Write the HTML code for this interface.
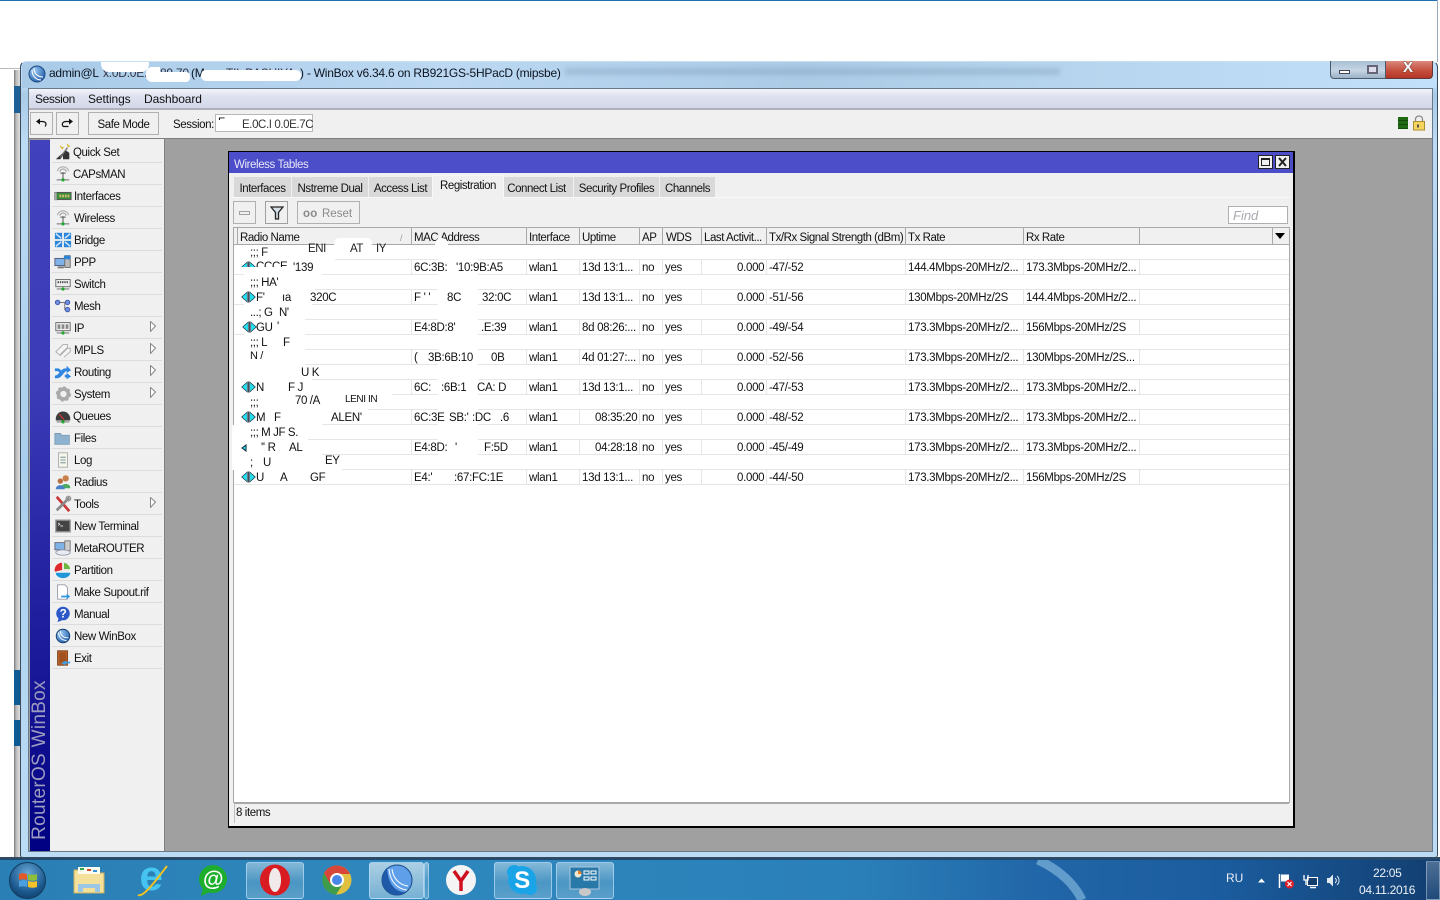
<!DOCTYPE html>
<html><head><meta charset="utf-8"><title>WinBox</title>
<style>
*{box-sizing:border-box}
html,body{margin:0;padding:0;background:#fff}
body{width:1440px;height:900px;position:relative;overflow:hidden;font:11.500px/14px "Liberation Sans",sans-serif;color:#111;letter-spacing:-.4px}
div,span,svg{position:absolute}
span{white-space:nowrap;margin-top:1px}
span.z{margin-top:0}
.mi{left:52px;width:110px;height:22px;border-bottom:1px solid #dcdcdc}
.mi span{left:22px;top:4px}
.mi svg{left:2px;top:2px;width:18px;height:18px}
.mi svg.sub{left:98px;top:4px;width:6px;height:11px}
.tab{top:177px;height:20px;background:#d9d9d9;text-align:center;line-height:24px;letter-spacing:-.45px}
.rw{left:411px;width:878px;height:16px;border-top:1px solid #e6e6e6;border-bottom:1px solid #e6e6e6;
background-image:linear-gradient(#e6e6e6,#e6e6e6),linear-gradient(#e6e6e6,#e6e6e6),linear-gradient(#e6e6e6,#e6e6e6),linear-gradient(#e6e6e6,#e6e6e6),linear-gradient(#e6e6e6,#e6e6e6),linear-gradient(#e6e6e6,#e6e6e6),linear-gradient(#e6e6e6,#e6e6e6),linear-gradient(#e6e6e6,#e6e6e6),linear-gradient(#e6e6e6,#e6e6e6),linear-gradient(#e6e6e6,#e6e6e6);
background-size:1px 100%;background-repeat:no-repeat;background-position:0 0,115px 0,168px 0,228px 0,251px 0,290px 0,355px 0,494px 0,612px 0,728px 0}
.ln{height:1px;background:#e6e6e6}
.t{line-height:14px;letter-spacing:-.3px}
.h{top:230px;line-height:14px;letter-spacing:-.45px}
.hs{top:228px;width:1px;height:17px;background:#a8a8a8}
.w{background:#fff}
span.tt{font-size:12px;letter-spacing:-.24px;top:66px;color:#0c1420;margin-top:0}
.tb{top:862px;height:37px;border:1px solid rgba(190,225,250,.65);border-radius:3px;background:linear-gradient(180deg,rgba(255,255,255,.42),rgba(255,255,255,.14) 55%,rgba(255,255,255,.22))}
</style></head>
<body>
<svg width="0" height="0" style="left:0;top:0"><defs>
<symbol id="reg" viewBox="0 0 15 12"><path d="M.7 6 6.300 1V11ZM14.300 6 8.700 1V11Z" fill="#22e0f0" stroke="#234" stroke-width=".7"/><path d="M7.500 .5V11.500" stroke="#123" stroke-width=".8"/></symbol>
<symbol id="ant" viewBox="0 0 20 20"><path d="M4 7a6 5 0 0 1 12 0" fill="none" stroke="#aaa" stroke-width="1.200"/><path d="M6.500 7.500a3.500 3 0 0 1 7 0" fill="none" stroke="#999" stroke-width="1.100"/><path d="M10 8V16M7 9h6" stroke="#555" stroke-width="1.100"/><path d="M3 16.500h14" stroke="#888" stroke-width="1.400"/><circle cx="10" cy="16.500" r="1.800" fill="#1fa82e"/></symbol>
<symbol id="sw" viewBox="0 0 20 20"><rect x="2" y="5" width="16" height="8" fill="#eee" stroke="#666"/><path d="M4 8h12" stroke="#444" stroke-dasharray="1.500 1" stroke-width="2"/><path d="M3 15.500h14" stroke="#888" stroke-width="1.300"/><circle cx="10" cy="15.500" r="1.800" fill="#1fa82e"/></symbol>
<symbol id="arr" viewBox="0 0 6 11"><path d="M.5.500 5.500 5 .5 10.500Z" fill="#fff" stroke="#888"/></symbol>
</defs></svg>

<!-- desktop top line -->
<div style="left:0;top:0;width:1440px;height:1px;background:#1f6fb2"></div>
<div style="left:1437px;top:0;width:3px;height:62px;background:#fff;border-left:1px solid #9ab"></div>

<!-- window behind -->
<div style="left:0;top:68px;width:20px;height:1px;background:#bbb"></div>
<div style="left:14px;top:70px;width:7px;height:788px;background:linear-gradient(90deg,#777,#bbb 30%,#e8e8e8)"></div>
<div style="left:14px;top:86px;width:6px;height:27px;background:#1e5f96"></div>
<div style="left:14px;top:670px;width:7px;height:35px;background:#0e5a92"></div>
<div style="left:14px;top:720px;width:7px;height:26px;background:#0e5a92"></div>

<!-- winbox frame -->
<div style="left:20px;top:61px;width:1418px;height:797px;border:1px solid #3a4a5c;border-top-color:#c8dff2;border-radius:6px 6px 3px 3px;background:linear-gradient(180deg,#b7d8f4 0,#c3def7 20px,#a8cbe8 32px,#bcdaf3 80px,#a9cfee 400px,#bcdcf5 100%)"></div>
<div style="left:22px;top:62px;width:1414px;height:26px;background:linear-gradient(90deg,#a9cbe8 0,#bcd8f2 30%,#abcbe6 55%,#b7d5ee 75%,#c2e0fa 100%);border-radius:5px 5px 0 0"></div>
<div style="left:565px;top:68px;width:495px;height:7px;background:rgba(110,140,170,.3);filter:blur(2.500px)"></div>

<svg style="left:28px;top:65px" width="18" height="18" viewBox="0 0 18 18"><defs><radialGradient id="wb" cx=".35" cy=".3" r=".8"><stop offset="0" stop-color="#9cc8f4"/><stop offset="1" stop-color="#1c5aa6"/></radialGradient></defs><circle cx="9" cy="9" r="8" fill="url(#wb)" stroke="#1d4d86"/><path d="M6 3c0 5 3 9 9 9M4 5c0 6 4 10 9 10" fill="none" stroke="#fff" stroke-width="1"/></svg>
<span class="tt" style="left:49px">admin@L</span>
<span class="tt" style="left:103px;color:#334">x.0D.0E..</span>
<span class="tt" style="left:160px;color:#334">89.70</span>
<span class="tt" style="left:191px">(M</span>
<span class="tt" style="left:226px;color:#334">TIL BASHIYA</span>
<div style="left:101px;top:62px;width:48px;height:10px;background:#fff;border-radius:0 0 8px 8px"></div>
<div style="left:146px;top:67px;width:14px;height:15px;background:#fff;border-radius:6px 0 0 6px"></div>
<div style="left:150px;top:72px;width:40px;height:10px;background:#fff;border-radius:4px"></div>
<div style="left:201px;top:70px;width:100px;height:11px;background:#fff;border-radius:5px"></div>
<span class="tt" style="left:300px">) - WinBox v6.34.6 on RB921GS-5HPacD (mipsbe)</span>

<!-- window controls -->
<div style="left:1330px;top:61px;width:29px;height:18px;border:1px solid #4a5a6a;border-top:0;border-radius:0 0 0 4px;background:linear-gradient(#a9bfd4,#c5d5e4 55%,#9db2c6)"></div>
<div style="left:1339px;top:70px;width:11px;height:4px;background:#fff;border:1px solid #445"></div>
<div style="left:1358px;top:61px;width:28px;height:18px;border:1px solid #4a5a6a;border-top:0;border-left:0;background:linear-gradient(#a9bfd4,#c5d5e4 55%,#9db2c6)"></div>
<div style="left:1367px;top:65px;width:11px;height:9px;background:#dde;border:2px solid #667"></div>
<div style="left:1386px;top:61px;width:47px;height:18px;border:1px solid #5c3a3a;border-top:0;border-left:0;border-radius:0 0 4px 0;background:linear-gradient(#d98a7c,#c5503e 55%,#b53526)"></div>
<span class="z" style="left:1403px;top:60px;font:700 15px/16px 'Liberation Sans',sans-serif;color:#fff;text-shadow:0 0 1px #333,0 0 1px #333;letter-spacing:0">X</span>

<!-- client -->
<div style="left:28px;top:88px;width:1405px;height:764px;background:#a0a0a0;border:1px solid #6a7a8a"></div>
<div style="left:29px;top:89px;width:1403px;height:19px;background:linear-gradient(#f2f4fa,#dfe3f0 35%,#d3d8ea)"></div>
<div style="left:29px;top:108px;width:1403px;height:2px;background:#b0b0b8"></div>
<div style="left:29px;top:110px;width:1403px;height:28px;background:#f0f0f0"></div>
<div style="left:29px;top:138px;width:1403px;height:1px;background:#808080"></div>
<span class="z" style="left:35px;top:92px;font-size:12px;letter-spacing:-.4px">Session</span>
<span class="z" style="left:88px;top:92px;font-size:12px;letter-spacing:-.1px">Settings</span>
<span class="z" style="left:144px;top:92px;font-size:12px;letter-spacing:-.1px">Dashboard</span>

<div style="left:30px;top:112px;width:23px;height:23px;border:1px solid #b0b0b0"></div>
<svg style="left:34px;top:116px" width="15" height="14" viewBox="0 0 15 14"><path d="M2 5.500 6 2.500V8.500Z" fill="#111"/><path d="M5 5.500h3c4 0 5 2.500 3 5" fill="none" stroke="#111" stroke-width="1.200"/></svg>
<div style="left:56px;top:112px;width:23px;height:23px;border:1px solid #b0b0b0"></div>
<svg style="left:60px;top:116px" width="15" height="14" viewBox="0 0 15 14"><path d="M13 5.500 9 2.500V8.500Z" fill="#111"/><path d="M10 5.500H6C2 5.500 1.500 9 3.500 10.500h5" fill="none" stroke="#111" stroke-width="1.200"/></svg>
<div style="left:88px;top:112px;width:71px;height:23px;border:1px solid #b0b0b0;text-align:center;line-height:24px">Safe Mode</div>
<span style="left:173px;top:117px">Session:</span>
<div style="left:215px;top:114px;width:98px;height:18px;background:#fff;border:1px solid #b8b8b8"></div>
<span style="left:218px;top:115px">F</span>
<span style="left:242px;top:117px;color:#333">E.0C.I 0.0E.7C</span>
<div style="left:218px;top:120px;width:24px;height:10px;background:#fff"></div>
<div style="left:1398px;top:117px;width:10px;height:12px;background:repeating-linear-gradient(#1f6a12 0,#1f6a12 3px,#124a0a 3px,#124a0a 4px)"></div>
<svg style="left:1412px;top:115px" width="14" height="16" viewBox="0 0 14 16"><path d="M3.500 7V4a3.500 3 0 0 1 7 0V7" fill="none" stroke="#888" stroke-width="1.300"/><rect x="1.500" y="6.500" width="11" height="8.500" fill="#f5d560" stroke="#a89030"/><rect x="5" y="9.500" width="2" height="3" fill="#554"/></svg>

<!-- sidebar strip -->
<div style="left:30px;top:140px;width:20px;height:711px;background:linear-gradient(#4141bd,#3b3bb8 35%,#1a1a9a 72%,#000082)"></div>
<span class="z" style="left:40px;top:760px;transform:translate(-50%,-50%) rotate(-90deg);font-size:19px;line-height:20px;letter-spacing:.3px;color:#9c9cc0">RouterOS WinBox</span>
<div style="left:50px;top:139px;width:115px;height:712px;background:#f0f0f0;border-right:1px solid #808080"></div>

<!-- menu items -->
<div class="mi" style="top:141px"><svg viewBox="0 0 20 20"><path d="M2 18 13 8l4 3v7H10V14l-3 4Z" fill="#333"/><path d="M7 16 15 5" stroke="#777" stroke-width="1.500"/><path d="M7 3l1 2 2 0-1 2M15 1l.5 2 2 .5-2 .5" fill="none" stroke="#d8b020" stroke-width="1.200"/></svg><span style="left:21px">Quick Set</span></div>
<div class="mi" style="top:163px"><svg><use href="#ant"/></svg><span style="left:21px">CAPsMAN</span></div>
<div class="mi" style="top:185px"><svg viewBox="0 0 20 20"><rect x="1" y="6" width="18" height="8" fill="#3c8a3c" stroke="#555"/><path d="M6 10h12" stroke="#cfc06a" stroke-width="3" stroke-dasharray="2 1"/><path d="M2 6v9" stroke="#aaa" stroke-width="2"/></svg><span>Interfaces</span></div>
<div class="mi" style="top:207px"><svg><use href="#ant"/></svg><span>Wireless</span></div>
<div class="mi" style="top:229px"><svg viewBox="0 0 20 20"><g fill="#2e86d8"><rect x="1" y="2" width="8" height="7"/><rect x="11" y="2" width="8" height="7"/><rect x="1" y="11" width="8" height="7"/><rect x="11" y="11" width="8" height="7"/></g><path d="M2 3l6 5M18 3l-6 5M2 17l6-5M18 17l-6-5" stroke="#d9ecff" stroke-width="1.500"/></svg><span>Bridge</span></div>
<div class="mi" style="top:251px"><svg viewBox="0 0 20 20"><rect x="1" y="6" width="12" height="8" fill="#7fb2e6" stroke="#557"/><rect x="12" y="3" width="6" height="13" fill="#bbb" stroke="#666"/><path d="M11 3h5v-1l3 3-3 3v-1h-5z" fill="#2e86d8"/><path d="M4 16h7" stroke="#777" stroke-width="2"/></svg><span>PPP</span></div>
<div class="mi" style="top:273px"><svg><use href="#sw"/></svg><span>Switch</span></div>
<div class="mi" style="top:295px"><svg viewBox="0 0 20 20"><path d="M5 6h7M12 6v8h2" fill="none" stroke="#666"/><circle cx="4" cy="6" r="2.500" fill="#6f8fe0" stroke="#3a55a8"/><circle cx="15" cy="6" r="2.500" fill="#6f8fe0" stroke="#3a55a8"/><circle cx="15" cy="14" r="2.500" fill="#6f8fe0" stroke="#3a55a8"/></svg><span>Mesh</span></div>
<div class="mi" style="top:317px"><svg viewBox="0 0 20 20"><rect x="2" y="4" width="16" height="9" fill="#eee" stroke="#666"/><path d="M4 8.500h12" stroke="#888" stroke-width="5" stroke-dasharray="3 1.500"/><path d="M3 15.500h14" stroke="#888" stroke-width="1.300"/><circle cx="10" cy="15.500" r="1.800" fill="#1fa82e"/></svg><span>IP</span><svg class="sub"><use href="#arr"/></svg></div>
<div class="mi" style="top:339px"><svg viewBox="0 0 20 20"><path d="M2 12 10 4h5v4l-8 8ZM7 15l7-7h4v4l-7 6" fill="#f4f4f4" stroke="#aaa"/></svg><span>MPLS</span><svg class="sub"><use href="#arr"/></svg></div>
<div class="mi" style="top:361px"><svg viewBox="0 0 20 20"><path d="M1 14c5 0 6-8 12-8h1V3l5 5-5 3V9c-3 0-5 8-11 8H1ZM1 6h3c3 0 4 3 5 4l-2 2C6 10 5 9 3 9H1ZM12 13h2v-2l5 4-5 3v-2h-2Z" fill="#2e86e0"/></svg><span>Routing</span><svg class="sub"><use href="#arr"/></svg></div>
<div class="mi" style="top:383px"><svg viewBox="0 0 20 20"><circle cx="10.500" cy="10" r="5.500" fill="none" stroke="#aaa" stroke-width="4"/><circle cx="10.500" cy="10" r="7.500" fill="none" stroke="#aaa" stroke-width="2" stroke-dasharray="3 2.800"/></svg><span>System</span><svg class="sub"><use href="#arr"/></svg></div>
<div class="mi" style="top:405px"><svg viewBox="0 0 20 20"><path d="M2 13a8 8 0 0 1 16 0v2H2Z" fill="#3c3c3c"/><path d="M6 8l5 6" stroke="#e03030" stroke-width="1.200"/><path d="M3 16.500h14" stroke="#888" stroke-width="1.300"/><circle cx="10" cy="16.500" r="1.800" fill="#1fa82e"/></svg><span style="left:21px">Queues</span></div>
<div class="mi" style="top:427px"><svg viewBox="0 0 20 20"><path d="M1 5h6l1.500 2H17V17H1Z" fill="#8db3d0" stroke="#7c9cb5"/></svg><span>Files</span></div>
<div class="mi" style="top:449px"><svg viewBox="0 0 20 20"><rect x="5" y="2" width="10" height="16" fill="#f6f6ee" stroke="#aaa"/><path d="M7 7h6M7 10h6M7 13h6" stroke="#9aa" stroke-width="1.500"/></svg><span>Log</span></div>
<div class="mi" style="top:471px"><svg viewBox="0 0 20 20"><circle cx="13" cy="6" r="3.500" fill="#c8804a"/><path d="M8 16c0-5 10-5 10 0v1H8Z" fill="#4aa860"/><circle cx="7" cy="9" r="3" fill="#b87040"/><path d="M2 18c0-6 10-6 10 0Z" fill="#4a80c8"/></svg><span>Radius</span></div>
<div class="mi" style="top:493px"><svg viewBox="0 0 20 20"><path d="M3 2 17 18" stroke="#c83838" stroke-width="3"/><path d="M17 3 3 17" stroke="#888" stroke-width="3"/><circle cx="16" cy="4" r="2.500" fill="none" stroke="#999" stroke-width="1.500"/></svg><span>Tools</span><svg class="sub"><use href="#arr"/></svg></div>
<div class="mi" style="top:515px"><svg viewBox="0 0 20 20"><rect x="2" y="3.500" width="16" height="13" fill="#444" stroke="#999" stroke-width="1.500"/><path d="M4.500 6.500l2 1.500-2 1.500M7 10h3" stroke="#ddd" fill="none"/></svg><span>New Terminal</span></div>
<div class="mi" style="top:537px"><svg viewBox="0 0 20 20"><rect x="1" y="4" width="11" height="8" fill="#7fb2e6" stroke="#667"/><rect x="12" y="2" width="6" height="11" fill="#ccc" stroke="#777"/><ellipse cx="10" cy="15" rx="8" ry="3" fill="#e6ecf2" stroke="#99a"/></svg><span>MetaROUTER</span></div>
<div class="mi" style="top:559px"><svg viewBox="0 0 20 20"><path d="M9 10V2a8 8 0 0 0-8 10Z" fill="#e0282c"/><path d="M11 9V2a8 8 0 0 1 7 7Z" fill="#6cb840"/><path d="M2 13h16a8 6 0 0 1-16 0Z" fill="#1f96d8"/></svg><span>Partition</span></div>
<div class="mi" style="top:581px"><svg viewBox="0 0 20 20"><path d="M4 2h8l3 3V18H4Z" fill="#fff" stroke="#99a"/><path d="M8 14h6v-2l4 3-4 3v-2H8Z" fill="#2e96e0"/></svg><span>Make Supout.rif</span></div>
<div class="mi" style="top:603px"><svg viewBox="0 0 20 20"><circle cx="10" cy="9.500" r="7.500" fill="#2c58c8"/><path d="M5 15l-1 4 5-2Z" fill="#2c58c8"/><text x="10" y="14" font-size="13" font-weight="700" fill="#fff" text-anchor="middle" font-family="Liberation Sans">?</text></svg><span>Manual</span></div>
<div class="mi" style="top:625px"><svg viewBox="0 0 20 20"><circle cx="10" cy="10" r="7.500" fill="url(#wb)" stroke="#123d70"/><path d="M7 4c0 5 3 8 9 8M5 6c0 6 4 9 9 9" fill="none" stroke="#fff"/></svg><span>New WinBox</span></div>
<div class="mi" style="top:647px"><svg viewBox="0 0 20 20"><rect x="4" y="2" width="11" height="16" fill="#b8622a" stroke="#7a3c14"/><rect x="6" y="4" width="7" height="12" fill="#a04f1e"/><path d="M8 15h5v-2l5 2.500L13 18v-1H8Z" transform="rotate(180 13 15.500)" fill="#38a0f0"/></svg><span>Exit</span></div>

<!-- wireless tables window -->
<div style="left:228px;top:151px;width:1067px;height:677px;background:#f0f0f0;border:2px solid #000;border-width:1px 2px 2px 1px"></div>
<div style="left:229px;top:152px;width:1064px;height:21px;background:#4c4dc9"></div>
<span style="left:234px;top:157px;color:#e8e8f8">Wireless Tables</span>
<div style="left:1258px;top:155px;width:15px;height:14px;background:#f0f0f0;border:1px solid #222"></div>
<div style="left:1261px;top:158px;width:9px;height:8px;border:1px solid #222;border-top-width:2px"></div>
<div style="left:1275px;top:155px;width:15px;height:14px;background:#f0f0f0;border:1px solid #222"></div>
<svg style="left:1278px;top:157px" width="9" height="10" viewBox="0 0 9 10"><path d="M1 1 8 9M8 1 1 9" stroke="#222" stroke-width="2"/></svg>

<div class="tab" style="left:234px;width:57px">Interfaces</div>
<div class="tab" style="left:292px;width:76px">Nstreme Dual</div>
<div class="tab" style="left:369px;width:63px">Access List</div>
<div class="tab" style="left:504px;width:69px;text-indent:-4px">Connect List</div>
<div class="tab" style="left:574px;width:85px">Security Profiles</div>
<div class="tab" style="left:660px;width:55px">Channels</div>
<div style="left:432px;top:175px;width:72px;height:23px;background:#f0f0f0;border:1px solid #f8f8f8;border-bottom:0;text-align:center;line-height:21px;letter-spacing:-.45px">Registration</div>
<div style="left:231px;top:197px;width:201px;height:1px;background:#f8f8f8"></div>
<div style="left:504px;top:197px;width:787px;height:1px;background:#f8f8f8"></div>

<div style="left:233px;top:201px;width:23px;height:23px;border:1px solid #b0b0b0"></div>
<div style="left:239px;top:211px;width:11px;height:4px;border:1px solid #a0a0a0"></div>
<div style="left:265px;top:201px;width:23px;height:23px;border:1px solid #a0a0a0"></div>
<svg style="left:270px;top:206px" width="14" height="14" viewBox="0 0 14 14"><path d="M1 1H13L8.500 6.500V13H5.500V6.500Z" fill="#d4e0e8" stroke="#222" stroke-width="1.300"/></svg>
<div style="left:297px;top:201px;width:63px;height:23px;border:1px solid #b0b0b0"></div>
<span style="left:303px;top:206px;color:#8a8a8a;font-weight:700;letter-spacing:.2px">oo</span>
<span style="left:322px;top:206px;color:#8a8a8a;letter-spacing:0">Reset</span>
<div style="left:1228px;top:206px;width:60px;height:18px;background:#fff;border:1px solid #b0b0b0"></div>
<span class="z" style="left:1233px;top:209px;color:#a8a8b0;font-style:italic;font-size:13px;letter-spacing:0">Find</span>

<!-- table -->
<div style="left:233px;top:227px;width:1057px;height:576px;background:#fff;border:1px solid #a8a8a8"></div>
<div style="left:234px;top:228px;width:1055px;height:17px;background:#f0f0f0;border-bottom:1px solid #a8a8a8"></div>
<div class="hs" style="left:237px"></div><div class="hs" style="left:411px"></div><div class="hs" style="left:526px"></div><div class="hs" style="left:579px"></div><div class="hs" style="left:639px"></div><div class="hs" style="left:662px"></div><div class="hs" style="left:701px"></div><div class="hs" style="left:766px"></div><div class="hs" style="left:905px"></div><div class="hs" style="left:1023px"></div><div class="hs" style="left:1139px"></div><div class="hs" style="left:1272px"></div>
<span class="h" style="left:240px">Radio Name</span>
<span class="h" style="left:400px;color:#999;font-size:9px">/</span>
<span class="h" style="left:414px">MAC Address</span>
<span class="h" style="left:529px">Interface</span>
<span class="h" style="left:582px">Uptime</span>
<span class="h" style="left:642px">AP</span>
<span class="h" style="left:666px">WDS</span>
<span class="h" style="left:704px">Last Activit...</span>
<span class="h" style="left:769px">Tx/Rx Signal Strength (dBm)</span>
<span class="h" style="left:908px">Tx Rate</span>
<span class="h" style="left:1026px">Rx Rate</span>
<svg style="left:1274px;top:232px" width="12" height="8"><path d="M1 1H11L6 7Z" fill="#000"/></svg>

<!-- rows -->
<div class="rw" style="top:259px"></div><div class="rw" style="top:289px"></div><div class="rw" style="top:319px"></div><div class="rw" style="top:349px"></div><div class="rw" style="top:379px"></div><div class="rw" style="top:409px"></div><div class="rw" style="top:439px"></div><div class="rw" style="top:469px"></div>
<!-- first col grid -->
<div class="ln" style="left:335px;top:259px;width:76px"></div><div class="ln" style="left:322px;top:274px;width:89px"></div>
<div class="ln" style="left:315px;top:289px;width:96px"></div><div class="ln" style="left:312px;top:304px;width:99px"></div>
<div class="ln" style="left:305px;top:319px;width:106px"></div><div class="ln" style="left:305px;top:334px;width:106px"></div>
<div class="ln" style="left:305px;top:349px;width:106px"></div><div class="ln" style="left:305px;top:364px;width:106px"></div>
<div class="ln" style="left:312px;top:379px;width:99px"></div><div class="ln" style="left:392px;top:394px;width:19px"></div>
<div class="ln" style="left:368px;top:409px;width:43px"></div><div class="ln" style="left:322px;top:424px;width:89px"></div>
<div class="ln" style="left:308px;top:439px;width:103px"></div><div class="ln" style="left:322px;top:454px;width:89px"></div>
<div class="ln" style="left:342px;top:469px;width:69px"></div><div class="ln" style="left:234px;top:484px;width:177px"></div>
<div class="ln" style="left:234px;top:274px;width:10px"></div><div class="ln" style="left:234px;top:304px;width:10px"></div><div class="ln" style="left:234px;top:334px;width:10px"></div>
<!-- whiteouts -->
<div class="w" style="left:438px;top:249px;width:40px;height:220px"></div>
<div class="w" style="left:334px;top:238px;width:38px;height:10px;border-radius:8px"></div>
<div class="w" style="left:435px;top:238px;width:13px;height:12px;border-radius:6px"></div>
<div class="w" style="left:232px;top:425px;width:6px;height:45px"></div>

<!-- comment lines -->
<span style="left:250px;top:245px;color:#222">;;; F</span><span style="left:308px;top:241px;color:#222">ENI</span><span style="left:350px;top:241px;color:#222">AT</span><span style="left:376px;top:241px;color:#222">IY</span>
<span style="left:250px;top:275px">;;; HA'</span>
<span style="left:250px;top:305px">...; G</span><span style="left:279px;top:305px">N'</span>
<span style="left:250px;top:335px">;;; L</span><span style="left:283px;top:335px">F</span>
<span style="left:250px;top:348px;font-size:11px">N /</span>
<span style="left:301px;top:365px">U K</span>
<span style="left:250px;top:395px">;;;</span><span style="left:295px;top:393px">70 /A</span><span style="left:345px;top:392px;font-size:10px">LENI IN</span>
<span style="left:250px;top:425px">;;; M JF S.</span>
<span style="left:250px;top:455px">;</span><span style="left:263px;top:455px">U</span><span style="left:325px;top:453px">EY</span>

<!-- data -->
<svg style="left:241px;top:261px" width="15" height="12"><use href="#reg"/></svg>
<span class="t" style="left:256px;top:259px">CCCE</span><span class="t" style="left:293px;top:260px">'139</span>
<div class="w" style="left:241px;top:267px;width:50px;height:6px"></div>
<span class="t" style="left:414px;top:260px">6C:3B:</span><span class="t" style="left:456px;top:260px">'10:9B:A5</span>
<svg style="left:241px;top:291px" width="15" height="12"><use href="#reg"/></svg>
<span class="t" style="left:256px;top:290px">F'</span><span class="t" style="left:282px;top:290px">ıa</span><span class="t" style="left:310px;top:290px">320C</span>
<span class="t" style="left:414px;top:290px">F ' '</span><span class="t" style="left:447px;top:290px">8C</span><span class="t" style="left:482px;top:290px">32:0C</span>
<svg style="left:242px;top:321px" width="15" height="12"><use href="#reg"/></svg>
<span class="t" style="left:256px;top:320px">GU</span><span class="t" style="left:277px;top:319px">'</span>
<span class="t" style="left:414px;top:320px">E4:8D:8'</span><span class="t" style="left:481px;top:320px">.E:39</span>
<span class="t" style="left:414px;top:350px">(</span><span class="t" style="left:428px;top:350px">3B:6B:10</span><span class="t" style="left:491px;top:350px">0B</span>
<svg style="left:241px;top:381px" width="15" height="12"><use href="#reg"/></svg>
<span class="t" style="left:256px;top:380px">N</span><span class="t" style="left:288px;top:380px">F J</span>
<span class="t" style="left:414px;top:380px">6C:</span><span class="t" style="left:441px;top:380px">:6B:1</span><span class="t" style="left:477px;top:380px">CA: D</span>
<svg style="left:241px;top:411px" width="15" height="12"><use href="#reg"/></svg>
<span class="t" style="left:256px;top:410px">M</span><span class="t" style="left:274px;top:410px">F</span><span class="t" style="left:331px;top:410px">ALEN'</span>
<span class="t" style="left:414px;top:410px">6C:3E</span><span class="t" style="left:449px;top:410px">SB:'</span><span class="t" style="left:472px;top:410px">:DC</span><span class="t" style="left:500px;top:410px">.6</span>
<svg style="left:241px;top:444px" width="8" height="8" viewBox="0 0 8 8"><path d="M1 4 5 1V7Z" fill="#22e0f0" stroke="#123"/></svg>
<span class="t" style="left:261px;top:440px">'' R</span><span class="t" style="left:289px;top:440px">AL</span>
<span class="t" style="left:414px;top:440px">E4:8D:</span><span class="t" style="left:455px;top:440px">'</span><span class="t" style="left:484px;top:440px">F:5D</span>
<svg style="left:241px;top:471px" width="15" height="12"><use href="#reg"/></svg>
<span class="t" style="left:256px;top:470px">U</span><span class="t" style="left:280px;top:470px">A</span><span class="t" style="left:310px;top:470px">GF</span>
<span class="t" style="left:414px;top:470px">E4:'</span><span class="t" style="left:454px;top:470px">:67:FC:1E</span>

<!-- columns -->
<span class="t" style="left:529px;top:260px">wlan1</span><span class="t" style="left:582px;top:260px">13d 13:1...</span><span class="t" style="left:642px;top:260px">no</span><span class="t" style="left:665px;top:260px">yes</span><span class="t" style="left:737px;top:260px">0.000</span><span class="t" style="left:769px;top:260px">-47/-52</span><span class="t" style="left:908px;top:260px">144.4Mbps-20MHz/2...</span><span class="t" style="left:1026px;top:260px">173.3Mbps-20MHz/2...</span>
<span class="t" style="left:529px;top:290px">wlan1</span><span class="t" style="left:582px;top:290px">13d 13:1...</span><span class="t" style="left:642px;top:290px">no</span><span class="t" style="left:665px;top:290px">yes</span><span class="t" style="left:737px;top:290px">0.000</span><span class="t" style="left:769px;top:290px">-51/-56</span><span class="t" style="left:908px;top:290px">130Mbps-20MHz/2S</span><span class="t" style="left:1026px;top:290px">144.4Mbps-20MHz/2...</span>
<span class="t" style="left:529px;top:320px">wlan1</span><span class="t" style="left:582px;top:320px">8d 08:26:...</span><span class="t" style="left:642px;top:320px">no</span><span class="t" style="left:665px;top:320px">yes</span><span class="t" style="left:737px;top:320px">0.000</span><span class="t" style="left:769px;top:320px">-49/-54</span><span class="t" style="left:908px;top:320px">173.3Mbps-20MHz/2...</span><span class="t" style="left:1026px;top:320px">156Mbps-20MHz/2S</span>
<span class="t" style="left:529px;top:350px">wlan1</span><span class="t" style="left:582px;top:350px">4d 01:27:...</span><span class="t" style="left:642px;top:350px">no</span><span class="t" style="left:665px;top:350px">yes</span><span class="t" style="left:737px;top:350px">0.000</span><span class="t" style="left:769px;top:350px">-52/-56</span><span class="t" style="left:908px;top:350px">173.3Mbps-20MHz/2...</span><span class="t" style="left:1026px;top:350px">130Mbps-20MHz/2S...</span>
<span class="t" style="left:529px;top:380px">wlan1</span><span class="t" style="left:582px;top:380px">13d 13:1...</span><span class="t" style="left:642px;top:380px">no</span><span class="t" style="left:665px;top:380px">yes</span><span class="t" style="left:737px;top:380px">0.000</span><span class="t" style="left:769px;top:380px">-47/-53</span><span class="t" style="left:908px;top:380px">173.3Mbps-20MHz/2...</span><span class="t" style="left:1026px;top:380px">173.3Mbps-20MHz/2...</span>
<span class="t" style="left:529px;top:410px">wlan1</span><span class="t" style="left:595px;top:410px">08:35:20</span><span class="t" style="left:642px;top:410px">no</span><span class="t" style="left:665px;top:410px">yes</span><span class="t" style="left:737px;top:410px">0.000</span><span class="t" style="left:769px;top:410px">-48/-52</span><span class="t" style="left:908px;top:410px">173.3Mbps-20MHz/2...</span><span class="t" style="left:1026px;top:410px">173.3Mbps-20MHz/2...</span>
<span class="t" style="left:529px;top:440px">wlan1</span><span class="t" style="left:595px;top:440px">04:28:18</span><span class="t" style="left:642px;top:440px">no</span><span class="t" style="left:665px;top:440px">yes</span><span class="t" style="left:737px;top:440px">0.000</span><span class="t" style="left:769px;top:440px">-45/-49</span><span class="t" style="left:908px;top:440px">173.3Mbps-20MHz/2...</span><span class="t" style="left:1026px;top:440px">173.3Mbps-20MHz/2...</span>
<span class="t" style="left:529px;top:470px">wlan1</span><span class="t" style="left:582px;top:470px">13d 13:1...</span><span class="t" style="left:642px;top:470px">no</span><span class="t" style="left:665px;top:470px">yes</span><span class="t" style="left:737px;top:470px">0.000</span><span class="t" style="left:769px;top:470px">-44/-50</span><span class="t" style="left:908px;top:470px">173.3Mbps-20MHz/2...</span><span class="t" style="left:1026px;top:470px">156Mbps-20MHz/2S</span>

<!-- status -->
<div style="left:234px;top:803px;width:1055px;height:1px;background:#a8a8a8"></div>
<div style="left:234px;top:804px;width:1055px;height:19px;background:#f0f0f0;border-left:1px solid #c0c0c0"></div>
<span style="left:236px;top:805px">8 items</span>

<!-- taskbar -->
<div style="left:0;top:858px;width:1440px;height:42px;background:linear-gradient(90deg,#2a7fb4 0,#2f88bd 30%,#2a7fb8 60%,#2166a8 72%,#1b5c9e 85%,#123e70 100%)"></div>
<div style="left:0;top:857px;width:1440px;height:3px;background:linear-gradient(#3a4a5a,#1c4a78)"></div>
<svg style="left:1020px;top:860px" width="80" height="40" viewBox="0 0 80 40"><path d="M18 0C40 10 55 25 62 40" fill="none" stroke="#7fb4dc" stroke-width="9" opacity=".7"/></svg>

<div style="left:9px;top:862px;width:37px;height:37px;border-radius:50%;background:radial-gradient(circle at 50% 30%,#6aa8d8,#1c5a90 60%,#0c3358);border:1px solid #123a5c"></div>
<svg style="left:17px;top:870px" width="22" height="20" viewBox="0 0 22 20"><path d="M2 4c3-1 5-1 8 0v6c-3-1-5-1-8 0Z" fill="#e25a28"/><path d="M11 4c3 1 6 1 9 0v6c-3 1-6 1-9 0Z" fill="#8cbf3c"/><path d="M2 11c3-1 5-1 8 0v6c-3-1-5-1-8 0Z" fill="#4aa0e0"/><path d="M11 11c3 1 6 1 9 0v6c-3 1-6 1-9 0Z" fill="#f2c228"/></svg>

<svg style="left:73px;top:864px" width="32" height="32" viewBox="0 0 32 32"><path d="M1 6h10l3 3h17V29H1Z" fill="#f3e09a" stroke="#c8b060"/><rect x="5" y="3" width="22" height="7" fill="#fbfbf0"/><rect x="7" y="4" width="4" height="2" fill="#2aa84a"/><rect x="14" y="5" width="4" height="2" fill="#d84a30"/><rect x="20" y="6" width="4" height="2" fill="#3a90d8"/><path d="M5 28V20H27V28H22V24H10V28Z" fill="#9cc6e6"/></svg>
<svg style="left:135px;top:862px" width="34" height="36" viewBox="0 0 34 36"><text x="16" y="28" font-size="42" font-weight="700" fill="#45c4f2" text-anchor="middle" font-family="Liberation Sans">e</text><path d="M3 33C9 36 24 14 32 4" fill="none" stroke="#f2c020" stroke-width="2"/></svg>
<svg style="left:197px;top:864px" width="32" height="33" viewBox="0 0 32 33"><circle cx="16" cy="15" r="14" fill="#1cae2c"/><path d="M6 24 4 32l9-4Z" fill="#1cae2c"/><text x="16" y="22" font-size="21" font-weight="700" fill="#fff" text-anchor="middle" font-family="Liberation Sans">@</text></svg>

<div class="tb" style="left:246px;width:58px"></div>
<svg style="left:259px;top:864px" width="32" height="32" viewBox="0 0 32 32"><ellipse cx="16" cy="16" rx="15" ry="15.500" fill="#d81c22"/><ellipse cx="16" cy="16" rx="6" ry="12" fill="#f0eaea"/></svg>
<svg style="left:322px;top:865px" width="30" height="30" viewBox="0 0 30 30"><circle cx="15" cy="15" r="14.500" fill="#e0c040"/><path d="M15 .5A14.500 14.500 0 0 0 2 8l6 11L15 9h13A14.500 14.500 0 0 0 15 .5Z" fill="#d8463a"/><path d="M2 8A14.500 14.500 0 0 0 14 29.500l6-9-12-2Z" fill="#3f9c4a"/><circle cx="15" cy="15" r="7" fill="#fff"/><circle cx="15" cy="15" r="5" fill="#4a86e8"/></svg>
<div class="tb" style="left:369px;width:55px;background:linear-gradient(180deg,rgba(255,255,255,.6),rgba(255,255,255,.35))"></div>
<div class="tb" style="left:424px;width:5px"></div>
<svg style="left:381px;top:864px" width="32" height="32" viewBox="0 0 32 32"><ellipse cx="16" cy="16" rx="15" ry="15" fill="#5f9ee8" stroke="#184a88"/><path d="M1 16c0 8 7 15 15 15 5 0 6-2 8-3-10 0-17-8-18-24C3 6 1 11 1 16Z" fill="#1f5aa8"/><path d="M11 5c1 9 7 16 16 17M8 5c1 12 8 20 18 21" fill="none" stroke="#e8f2ff" stroke-width="1.200"/></svg>
<svg style="left:446px;top:865px" width="30" height="30" viewBox="0 0 30 30"><circle cx="15" cy="15" r="15" fill="#f4f4f4"/><path d="M8 6l7 10 7-10M15 16V26" fill="none" stroke="#cf1020" stroke-width="3.500"/></svg>
<div class="tb" style="left:494px;width:58px"></div>
<svg style="left:506px;top:864px" width="32" height="32" viewBox="0 0 32 32"><circle cx="16" cy="16" r="14" fill="#1aa4e8"/><circle cx="8" cy="8" r="7" fill="#1aa4e8"/><circle cx="24" cy="24" r="7" fill="#1aa4e8"/><text x="16" y="24" font-size="24" font-weight="700" fill="#fff" text-anchor="middle" font-family="Liberation Sans">S</text></svg>
<div class="tb" style="left:556px;width:58px"></div>
<svg style="left:569px;top:866px" width="32" height="30" viewBox="0 0 32 30"><rect x="1" y="1" width="29" height="22" fill="#2878a8" stroke="#aac8e0"/><circle cx="9" cy="8" r="3.500" fill="#f0e8d0"/><path d="M9 8V4.500A3.500 3.500 0 0 1 12.500 8Z" fill="#f08020"/><rect x="15" y="5" width="5" height="3" fill="none" stroke="#fff"/><rect x="22" y="5" width="5" height="3" fill="none" stroke="#fff"/><rect x="15" y="11" width="5" height="3" fill="none" stroke="#fff"/><rect x="22" y="11" width="5" height="3" fill="none" stroke="#fff"/><ellipse cx="16" cy="26" rx="6" ry="4" fill="#c8c8c8"/></svg>

<span class="z" style="left:1226px;top:871px;color:#e6eef6;font-size:12px;letter-spacing:0">RU</span>
<svg style="left:1257px;top:877px" width="9" height="6"><path d="M1 5.500 4.500 1.500 8 5.500Z" fill="#fff"/></svg>
<svg style="left:1278px;top:873px" width="16" height="16" viewBox="0 0 16 16"><path d="M1.500 1V15" stroke="#fff" stroke-width="1.500"/><path d="M3 1.500h8v7H3Z" fill="#fff"/><circle cx="11.500" cy="11" r="4.500" fill="#e0202a"/><path d="M9.500 9l4 4M13.500 9l-4 4" stroke="#fff" stroke-width="1.200"/></svg>
<svg style="left:1302px;top:874px" width="16" height="15" viewBox="0 0 16 15"><rect x="5.500" y="3.500" width="10" height="8" fill="#123d6c" stroke="#fff"/><path d="M8 13.500h6" stroke="#fff" stroke-width="1.500"/><path d="M2 1v5h4V1M4 6v5" fill="none" stroke="#fff" stroke-width="1.300"/></svg>
<svg style="left:1326px;top:873px" width="16" height="15" viewBox="0 0 16 15"><path d="M1 5H3.500L7 1.500V13.500L3.500 10H1Z" fill="#e0e8f0"/><path d="M9 5a3 3 0 0 1 0 5M11 3a6 6 0 0 1 0 9" fill="none" stroke="#dde6ee"/></svg>
<span class="z" style="left:1373px;top:866px;color:#eef3f8;font-size:12px;letter-spacing:-.3px">22:05</span>
<span class="z" style="left:1359px;top:883px;color:#eef3f8;font-size:12px;letter-spacing:-.3px">04.11.2016</span>
<div style="left:1426px;top:861px;width:14px;height:39px;background:linear-gradient(rgba(255,255,255,.25),rgba(255,255,255,.06));border:1px solid rgba(190,210,230,.5)"></div>
</body></html>
